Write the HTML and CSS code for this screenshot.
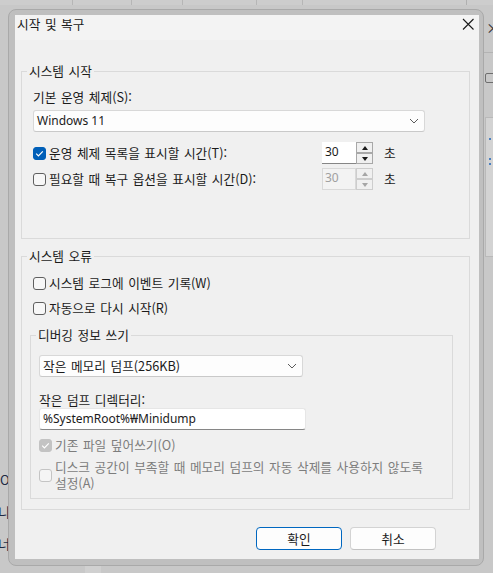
FILE: index.html
```html
<!DOCTYPE html>
<html lang="ko">
<head>
<meta charset="utf-8">
<title>시작 및 복구</title>
<link rel="stylesheet" href="styles.css">
</head>
<body>
<div class="desktop">
  <div class="tabstrip">
    <span class="seg s1"></span><span class="seg s2"></span><span class="seg s3"></span><span class="seg s4"></span><span class="seg s5"></span><span class="seg s6"></span>
  </div>
  <span class="bg-text bt1">O</span>
  <span class="bg-text bt2">니</span>
  <span class="bg-text bt3">너</span>
  <span class="bg-x">×</span>
  <span class="bg-line"></span>
  <span class="bg-box"></span>
  <div class="bg-thumb"><i></i><i></i><i></i></div>
  <span class="bg-foot"></span>

  <div class="frame">
    <div class="dialog">
      <div class="titlebar">
        <span class="title">시작 및 복구</span>
        <svg class="close" width="12" height="12" viewBox="0 0 12 12"><path d="M1 1L11.5 11.5M11.5 1L1 11.5"/></svg>
      </div>
      <div class="body">
        <fieldset class="group g1">
          <legend>시스템 시작</legend>
          <div class="g1-content">
            <div class="label">기본 운영 체제(S):</div>
            <div class="combo combo-os">
              <span class="latin">Windows 11</span>
              <svg class="chev" width="10" height="6" viewBox="0 0 10 6"><path d="M1 1L5 5L9 1"/></svg>
            </div>
            <div class="spin-grid">
              <div class="check-row">
                <span class="cb checked"><svg width="13" height="13" viewBox="0 0 13 13"><path d="M3.2 6.6L5.4 8.8L9.8 4.3"/></svg></span>
                <span>운영 체제 목록을 표시할 시간(T):</span>
              </div>
              <div class="spin">
                <span class="spin-field latin">30</span>
                <span class="spin-btns"><span class="sbtn"><i class="up"></i></span><span class="sbtn"><i class="down"></i></span></span>
              </div>
              <span class="unit">초</span>

              <div class="check-row">
                <span class="cb"></span>
                <span>필요할 때 복구 옵션을 표시할 시간(D):</span>
              </div>
              <div class="spin disabled">
                <span class="spin-field latin">30</span>
                <span class="spin-btns"><span class="sbtn"><i class="up"></i></span><span class="sbtn"><i class="down"></i></span></span>
              </div>
              <span class="unit">초</span>
            </div>
          </div>
        </fieldset>

        <fieldset class="group g2">
          <legend>시스템 오류</legend>
          <div class="g2-content">
            <div class="check-row row-a">
              <span class="cb"></span>
              <span>시스템 로그에 이벤트 기록(W)</span>
            </div>
            <div class="check-row row-b">
              <span class="cb"></span>
              <span>자동으로 다시 시작(R)</span>
            </div>
            <fieldset class="group dbg">
              <legend>디버깅 정보 쓰기</legend>
              <div class="dbg-content">
                <div class="combo combo-dump">
                  <span>작은 메모리 덤프(256KB)</span>
                  <svg class="chev" width="10" height="6" viewBox="0 0 10 6"><path d="M1 1L5 5L9 1"/></svg>
                </div>
                <div class="label dir-label">작은 덤프 디렉터리:</div>
                <div class="textbox latin">%SystemRoot%₩Minidump</div>
                <div class="check-row row-c disabled">
                  <span class="cb checked"><svg width="13" height="13" viewBox="0 0 13 13"><path d="M3.2 6.6L5.4 8.8L9.8 4.3"/></svg></span>
                  <span>기존 파일 덮어쓰기(O)</span>
                </div>
                <div class="check-row row-d disabled">
                  <span class="cb"></span>
                  <span class="wrap">디스크 공간이 부족할 때 메모리 덤프의 자동 삭제를 사용하지 않도록 설정(A)</span>
                </div>
              </div>
            </fieldset>
          </div>
        </fieldset>

        <div class="buttons">
          <button class="btn default">확인</button>
          <button class="btn">취소</button>
        </div>
      </div>
    </div>
  </div>
</div>
</body>
</html>
```

FILE: styles.css
```css
* { box-sizing: border-box; }

html, body {
  margin: 0;
  padding: 0;
}

body {
  font-family: "Noto Sans CJK KR", "Noto Sans", sans-serif;
  font-size: 12.7px;
  line-height: 16px;
  word-spacing: 1px;
  color: #1b1b1b;
}

.latin {
  font-family: "Noto Sans", "Noto Sans CJK KR", sans-serif;
  font-size: 12px;
  word-spacing: 0;
}

.desktop {
  position: relative;
  width: 493px;
  height: 573px;
  overflow: hidden;
  background: #c8c8c8;
}

/* dimmed parent window fragments */
.tabstrip {
  position: absolute;
  left: 0;
  top: 0;
  width: 493px;
  height: 5px;
  display: flex;
  background: #cdcdcd;
}
.seg { height: 5px; border-right: 1px solid #b6b6b6; }
.s1 { width: 73px; }
.s2 { width: 59px; }
.s3 { width: 51px; }
.s4 { width: 74px; }
.s5 { width: 46px; }
.s6 { width: 164px; border-right-color: #b0b0b0; }

.bg-text {
  position: absolute;
  left: 0;
  font-size: 13px;
  line-height: 16px;
  color: #1d2a44;
}
.bt1 { top: 472px; }
.bt2 { top: 504px; left: -2px; }
.bt3 { top: 536px; left: -2px; }

.bg-x {
  position: absolute;
  left: 486px;
  top: 19px;
  font-size: 14px;
  color: #303030;
}
.bg-line {
  position: absolute;
  left: 484px;
  top: 52px;
  width: 12px;
  height: 1px;
  background: #b3b3b3;
}
.bg-box {
  position: absolute;
  left: 485px;
  top: 73px;
  width: 12px;
  height: 10px;
  border: 1px solid #6e6e6e;
  border-radius: 2px;
}
.bg-thumb {
  position: absolute;
  left: 485px;
  top: 117px;
  width: 12px;
  height: 140px;
  background: #d3d3d3;
  border: 1px solid #b9b9b9;
  padding: 20px 0 0 3px;
}
.bg-thumb i {
  display: block;
  width: 2px;
  height: 2px;
  background: #4a7fc0;
  margin-bottom: 18px;
}
.bg-thumb i:nth-child(2) { margin-bottom: 3px; }
.bg-foot {
  position: absolute;
  left: 85px;
  top: 566px;
  width: 16px;
  height: 7px;
  background: #d0d0d0;
}

/* dialog window */
.frame {
  position: absolute;
  left: 8px;
  top: 9px;
  width: 476px;
  height: 557px;
  padding: 5px 4px 6px 6px;
  border: 1px solid #a9a9a9;
  border-radius: 8px;
  background: #bfbfbf;
}

.dialog {
  width: 464px;
  height: 544px;
  background: #f0f0f0;
}

.titlebar {
  height: 25px;
  background: #f3f3f3;
  padding: 1px 0 0 2px;
  display: flex;
  justify-content: space-between;
  align-items: flex-start;
}
.title { color: #1a1a1a; }
.close {
  margin: 2px 5px 0 0;
  fill: none;
  stroke: #1a1a1a;
  stroke-width: 1.1;
}

.body {
  height: 519px;
  padding: 23px 0 0 6px;
}

fieldset.group {
  margin: 0;
  padding: 0;
  border: 1px solid #dadada;
  min-width: 0;
}
fieldset.group > legend {
  margin-left: 5px;
  padding: 0 2px;
  height: 16px;
  line-height: 16px;
}

fieldset.g1 { width: 449px; }
.g1-content { padding: 10px 0 48px 11px; }

.label { height: 16px; }

.combo {
  display: flex;
  align-items: center;
  justify-content: space-between;
  height: 22px;
  background: #fdfdfd;
  border: 1px solid #d8d8d8;
  border-bottom-color: #c9c9c9;
  border-radius: 3px;
  padding: 0 5px 0 3px;
}
.combo-os { width: 392px; margin-top: 5px; }
.chev {
  fill: none;
  stroke: #5c5c5c;
  stroke-width: 1;
}

.spin-grid {
  margin-top: 10px;
  display: grid;
  grid-template-columns: 278px 51px auto;
  grid-auto-rows: 22px;
  column-gap: 11px;
  row-gap: 4px;
  align-items: center;
}

.check-row {
  display: flex;
  align-items: center;
  gap: 3px;
  line-height: 16px;
}

.cb {
  flex: none;
  width: 13px;
  height: 13px;
  border: 1px solid #5f5f5f;
  border-radius: 3px;
  background: #f7f7f7;
  display: flex;
}
.cb svg {
  margin: -1px;
  fill: none;
  stroke: #fff;
  stroke-width: 1.2;
}
.cb.checked {
  background: #005fb8;
  border-color: #005fb8;
}
.disabled { color: #7d7d7d; }
.disabled .cb { border-color: #c4c4c4; background: #f5f5f5; }
.disabled .cb.checked { background: #c3c3c3; border-color: #c3c3c3; }

.spin {
  display: flex;
  height: 22px;
}
.spin-field {
  width: 34px;
  height: 22px;
  padding: 2px 0 0 3px;
  background: #fff;
  border-bottom: 1px solid #868686;
}
.spin-btns {
  width: 17px;
  display: flex;
  flex-direction: column;
}
.sbtn {
  height: 11px;
  border: 1px solid #a8a8a8;
  background: #f0f0f0;
  display: flex;
  align-items: center;
  justify-content: center;
}
.sbtn i {
  width: 0;
  height: 0;
  border-left: 3.5px solid transparent;
  border-right: 3.5px solid transparent;
}
.sbtn i.up { border-bottom: 4px solid #1a1a1a; }
.sbtn i.down { border-top: 4px solid #1a1a1a; }

.spin.disabled .spin-field {
  background: #f3f3f3;
  border: 1px solid #d9d9d9;
  padding: 1px 0 0 2px;
  color: #a0a0a0;
}
.spin.disabled .sbtn { border-color: #cdcdcd; }
.spin.disabled .sbtn i.up { border-bottom-color: #a6a6a6; }
.spin.disabled .sbtn i.down { border-top-color: #a6a6a6; }

.unit { line-height: 16px; }

fieldset.g2 { width: 449px; margin-top: 9px; }
.g2-content { padding: 11px 0 10px 8px; }
.g2-content > .check-row { height: 16px; padding-left: 3px; }
.row-b { margin-top: 9px; }

fieldset.dbg { width: 423px; margin-top: 11px; }
.dbg-content { padding: 12px 0 7px 8px; }
.combo-dump { width: 264px; }
.dir-label { margin-top: 15px; }

.textbox {
  width: 267px;
  height: 22px;
  background: #fff;
  border: 1px solid #e6e6e6;
  border-bottom: 1px solid #868686;
  border-radius: 3px;
  padding: 2px 0 0 3px;
}

.row-c { margin-top: 7px; height: 16px; }
.row-d { margin-top: 6px; }
.wrap {
  width: 380px;
  word-break: keep-all;
}

.buttons {
  margin-top: 17px;
  display: flex;
  justify-content: flex-end;
  gap: 8px;
  padding-right: 43px;
}
.btn {
  width: 86px;
  height: 23px;
  margin: 0;
  padding: 0;
  font: inherit;
  line-height: 16px;
  color: #1a1a1a;
  background: #fdfdfd;
  border: 1px solid #d3d3d3;
  border-bottom-color: #c2c2c2;
  border-radius: 4px;
}
.btn.default {
  border: 1px solid #0067c0;
}
```
